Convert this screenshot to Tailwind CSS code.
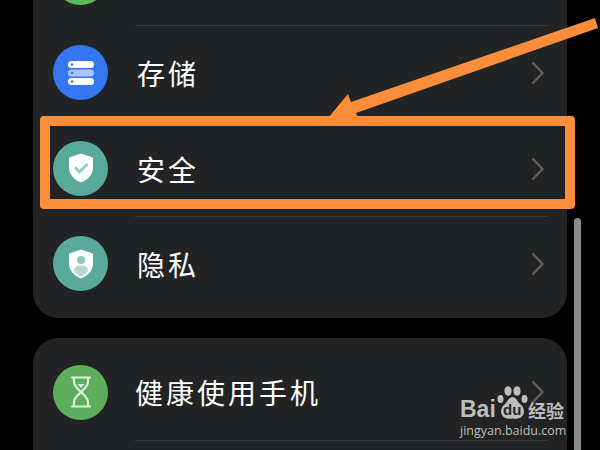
<!DOCTYPE html>
<html lang="zh">
<head>
    <meta charset="utf-8">
    <title>设置</title>
    <script src="https://cdn.jsdelivr.net/npm/@tailwindcss/browser@4"></script>
</head>
<body class="bg-black">
    <div class="relative flex w-[600px] h-[450px] overflow-hidden bg-black font-['Noto_Sans_CJK_SC','Noto_Sans',sans-serif]">

        <!-- settings column -->
        <div class="ml-[33px] w-[534px] flex flex-col gap-[20px] shrink-0">

            <div class="-mt-[71px] rounded-[26px] bg-[#222324] pb-[6px] shrink-0">
                <div class="flex items-center h-[96px] pl-[20px]">
                    <div class="w-[55px] h-[55px] rounded-full bg-[#5cb85c] shrink-0"></div>
                </div>

                <div class="flex h-[95.5px] pl-[20px]">
                    <div class="self-center w-[55px] h-[55px] rounded-full bg-[#3577f1] flex items-center justify-center shrink-0">
                        <svg width="28" height="26" viewBox="0 0 28 26">
                            <rect x="1" y="1" width="26" height="7" rx="3.5" fill="#fff"/>
                            <rect x="1" y="9.5" width="26" height="7" rx="3.5" fill="#a9c6fb"/>
                            <rect x="1" y="18" width="26" height="7" rx="3.5" fill="#fff"/>
                            <circle cx="5" cy="4.5" r="1.3" fill="#3577f1"/>
                            <circle cx="5" cy="13" r="1.3" fill="#3577f1"/>
                            <circle cx="5" cy="21.5" r="1.3" fill="#3577f1"/>
                        </svg>
                    </div>
                    <div class="flex-1 ml-[27px] mr-[19px] flex items-center justify-between border-t border-[#3a3b3d]">
                        <span class="ml-[2px] text-[28px] tracking-[3px] text-white">存储</span>
                        <svg class="mr-[4px]" width="13" height="24" viewBox="0 0 13 24" fill="none"><path d="M1.5 1.5 L11.5 12 L1.5 22.5" stroke="#5e5f60" stroke-width="2.4"/></svg>
                    </div>
                </div>

                <div class="flex h-[95.5px] pl-[20px]">
                    <div class="self-center w-[55px] h-[55px] rounded-full bg-[#5aaa9c] flex items-center justify-center shrink-0">
                        <svg width="26" height="30" viewBox="0 0 26 30">
                            <path d="M13 0.5 L25 4.5 V15 C25 22 19 27 13 29.5 C7 27 1 22 1 15 V4.5 Z" fill="#fff"/>
                            <path d="M7 14.5 L11.5 19 L19.5 11" fill="none" stroke="#8ec9bd" stroke-width="2.6"/>
                        </svg>
                    </div>
                    <div class="flex-1 ml-[27px] mr-[19px] flex items-center justify-between border-t border-[#3a3b3d]">
                        <span class="ml-[2px] text-[28px] tracking-[3px] text-white">安全</span>
                        <svg class="mr-[4px]" width="13" height="24" viewBox="0 0 13 24" fill="none"><path d="M1.5 1.5 L11.5 12 L1.5 22.5" stroke="#5e5f60" stroke-width="2.4"/></svg>
                    </div>
                </div>

                <div class="flex h-[95.5px] pl-[20px]">
                    <div class="self-center w-[55px] h-[55px] rounded-full bg-[#5aaa9c] flex items-center justify-center shrink-0">
                        <svg width="26" height="30" viewBox="0 0 26 30">
                            <path d="M13 0.5 L25 4.5 V15 C25 22 19 27 13 29.5 C7 27 1 22 1 15 V4.5 Z" fill="#fff"/>
                            <circle cx="13" cy="11" r="4" fill="#8ec9bd"/>
                            <path d="M6 22 C6 18 9 16.5 13 16.5 C17 16.5 20 18 20 22 C18 25 15.5 26.5 13 27 C10.5 26.5 8 25 6 22 Z" fill="#b5d9d2"/>
                        </svg>
                    </div>
                    <div class="flex-1 ml-[27px] mr-[19px] flex items-center justify-between border-t border-[#3a3b3d]">
                        <span class="ml-[2px] text-[28px] tracking-[3px] text-white">隐私</span>
                        <svg class="mr-[4px]" width="13" height="24" viewBox="0 0 13 24" fill="none"><path d="M1.5 1.5 L11.5 12 L1.5 22.5" stroke="#5e5f60" stroke-width="2.4"/></svg>
                    </div>
                </div>
            </div>

            <div class="rounded-[26px] bg-[#222324] pt-[6px] h-[160px] shrink-0">
                <div class="flex h-[97px] pl-[20px]">
                    <div class="self-center w-[55px] h-[55px] rounded-full bg-[#5cad5c] flex items-center justify-center shrink-0">
                        <svg width="22" height="32" viewBox="0 0 22 32" fill="none" stroke="#dff0dc" stroke-width="2.2" stroke-linecap="round">
                            <path d="M2 1.5 H20 M2 30.5 H20"/>
                            <path d="M4 2 V6 C4 10 8 13 11 16 C14 13 18 10 18 6 V2"/>
                            <path d="M4 30 V26 C4 22 8 19 11 16 C14 19 18 22 18 26 V30"/>
                            <path d="M7.5 8 H14.5 L11 12 Z" fill="#dff0dc" stroke="none"/>
                        </svg>
                    </div>
                    <div class="flex-1 ml-[27px] mr-[19px] flex items-center justify-between border-b border-[#3a3b3d]">
                        <span class="text-[28px] tracking-[3px] text-white">健康使用手机</span>
                        <svg class="mr-[4px]" width="13" height="24" viewBox="0 0 13 24" fill="none"><path d="M1.5 1.5 L11.5 12 L1.5 22.5" stroke="#5e5f60" stroke-width="2.4"/></svg>
                    </div>
                </div>
            </div>
        </div>

        <!-- scrollbar -->
        <div class="ml-[7px] mt-[218px] w-[7px] h-[300px] rounded-full bg-[#8a8a8a] shrink-0"></div>

        <!-- annotation -->
        <div class="absolute left-[40px] top-[116px] w-[535px] h-[93px] border-[10px] border-[#fb8d3b] rounded-[4px]"></div>
        <svg class="absolute left-0 top-0" width="600" height="450" viewBox="0 0 600 450">
            <polygon points="595,18 598,28 356,113 358,118 328,118 348,94 351,102" fill="#fb8d3b"/>
        </svg>

        <!-- watermark -->
        <div class="absolute left-[460px] top-[386px] w-[108px] h-[50px] text-[#bdbdbd]">
            <div class="flex items-end h-[34px]">
                <span class="font-['Liberation_Sans'] font-bold text-[23px] leading-[18px] w-[37px] mb-[2px]">Bai</span>
                <div class="relative w-[31px] h-[34px] shrink-0">
                    <svg width="31" height="34" viewBox="0 0 31 34" fill="currentColor">
                        <ellipse cx="3.5" cy="13" rx="3" ry="4"/>
                        <ellipse cx="11" cy="5" rx="3.6" ry="4.8"/>
                        <ellipse cx="20" cy="5" rx="3.6" ry="4.8"/>
                        <ellipse cx="27.5" cy="13" rx="3" ry="4"/>
                        <path d="M15.5 11 C19 11 20 15 23 18 C27 21 27.5 25 26.5 28 C24.5 33 19.5 33 15.5 32.5 C11.5 33 6.5 33 4.5 28 C3.5 25 4 21 8 18 C11 15 12 11 15.5 11 Z"/>
                    </svg>
                    <span class="absolute left-[6px] top-[17px] font-['Liberation_Sans'] font-bold text-[15px] leading-[14px] text-[#222324]">du</span>
                </div>
                <span class="text-[18px] leading-[20px] font-bold">经验</span>
            </div>
            <div class="mt-[3px] font-['Open_Sans'] text-[12.5px] leading-[16px] whitespace-nowrap">jingyan.baidu.com</div>
        </div>
    </div>
</body>
</html>
